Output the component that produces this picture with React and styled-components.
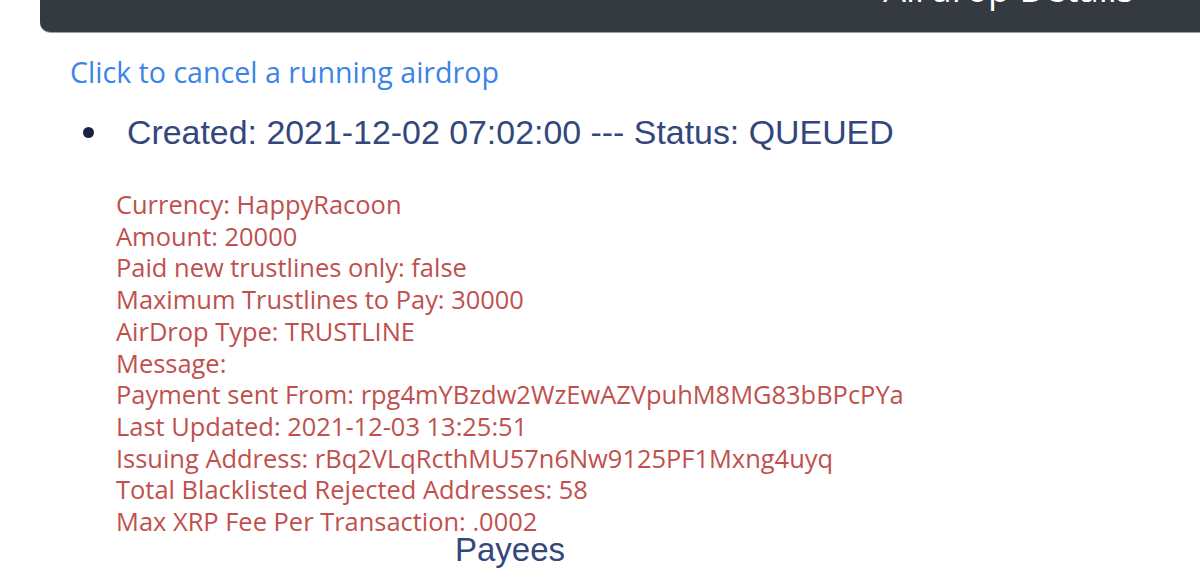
import React from "react";
import styled, { createGlobalStyle } from "styled-components";

const Global = createGlobalStyle`
  html, body { margin: 0; padding: 0; background: #ffffff; }
  body { font-family: "Open Sans", "Liberation Sans", sans-serif; overflow: hidden; }
`;

const Page = styled.div`
  width: 1200px;
  height: 579px;
  overflow: hidden;
`;

const Header = styled.header`
  margin-left: 40px;
  height: 32px;
  background: #343a40;
  border-bottom-left-radius: 10px;
  box-shadow: 0 1px 0 #9aa0a6;
  display: flex;
  justify-content: flex-end;
  align-items: flex-end;
  overflow: hidden;
  padding-right: 66px;
`;

const Title = styled.h1`
  margin: 0 0 25px 0;
  font-family: "Open Sans", sans-serif;
  font-weight: 400;
  font-size: 36px;
  line-height: 36px;
  color: #ffffff;
`;

const Main = styled.main`
  width: 940px;
  margin-left: 40px;
  padding: 0 30px;
  box-sizing: border-box;
`;

const CancelLink = styled.a`
  display: block;
  margin-top: 24px;
  font-family: "Open Sans", sans-serif;
  font-size: 28.6px;
  line-height: 32px;
  color: #3b84e8;
  text-decoration: none;
  cursor: pointer;
`;

const List = styled.ul`
  list-style: none;
  margin: 24px 0 0 0;
  padding: 0;
`;

const Item = styled.li`
  display: flex;
  align-items: center;
`;

const Dot = styled.span`
  width: 11px;
  height: 11px;
  border-radius: 50%;
  background: #1a2143;
  margin-left: 12.5px;
  margin-right: 33.5px;
  flex: none;
`;

const Created = styled.span`
  font-family: "Liberation Sans", Arial, sans-serif;
  font-size: 33.9px;
  line-height: 40px;
  color: #34477d;
`;

const Details = styled.div`
  margin: 37px 0 0 46px;
  font-family: "Open Sans", sans-serif;
  font-size: 25.45px;
  line-height: 31.7px;
  color: #c0504d;
`;

const Line = styled.div`
  white-space: nowrap;
`;

const Payees = styled.h2`
  margin: -6px 0 0 0;
  text-align: center;
  font-family: "Liberation Sans", Arial, sans-serif;
  font-weight: 400;
  font-size: 33px;
  line-height: 1.1;
  color: #34477d;
`;

const details = [
  "Currency: HappyRacoon",
  "Amount: 20000",
  "Paid new trustlines only: false",
  "Maximum Trustlines to Pay: 30000",
  "AirDrop Type: TRUSTLINE",
  "Message:",
  "Payment sent From: rpg4mYBzdw2WzEwAZVpuhM8MG83bBPcPYa",
  "Last Updated: 2021-12-03 13:25:51",
  "Issuing Address: rBq2VLqRcthMU57n6Nw9125PF1Mxng4uyq",
  "Total Blacklisted Rejected Addresses: 58",
  "Max XRP Fee Per Transaction: .0002",
];

export default function App() {
  return (
    <Page>
      <Global />
      <Header>
        <Title>Airdrop Details</Title>
      </Header>
      <Main>
        <CancelLink>Click to cancel a running airdrop</CancelLink>
        <List>
          <Item>
            <Dot />
            <Created>Created: 2021-12-02 07:02:00 --- Status: QUEUED</Created>
          </Item>
        </List>
        <Details>
          {details.map((d) => (
            <Line key={d}>{d}</Line>
          ))}
        </Details>
        <Payees>Payees</Payees>
      </Main>
    </Page>
  );
}
